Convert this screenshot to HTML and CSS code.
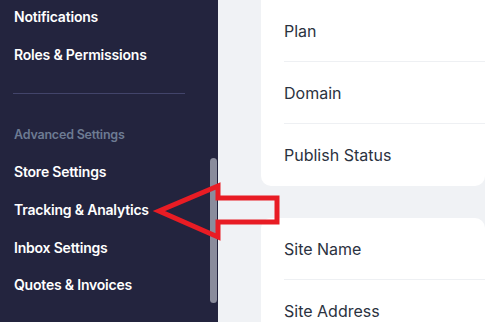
FILE: index.html
```html
<!DOCTYPE html>
<html lang="en">
<head>
    <meta charset="UTF-8">
    <title>Settings</title>
    <link rel="stylesheet" href="styles.css">
</head>

<body>
    <div class="layout">
        <aside class="sidebar">
            <nav class="nav">
                <a class="nav-item">Notifications</a>
                <a class="nav-item">Roles &amp; Permissions</a>
                <div class="nav-divider"></div>
                <div class="nav-heading">Advanced Settings</div>
                <a class="nav-item">Store Settings</a>
                <a class="nav-item">Tracking &amp; Analytics</a>
                <a class="nav-item">Inbox Settings</a>
                <a class="nav-item">Quotes &amp; Invoices</a>
            </nav>
            <div class="scrollbar"></div>
        </aside>

        <main class="content">
            <section class="card card-scrolled">
                <div class="row">Plan</div>
                <div class="row">Domain</div>
                <div class="row">Publish Status</div>
            </section>

            <section class="card">
                <div class="row">Site Name</div>
                <div class="row">Site Address</div>
            </section>
        </main>
    </div>

    <svg class="pointer" width="485" height="322" viewBox="0 0 485 322">
        <polygon points="159,211 218,186 218,198 277,198 277,222 218,222 218,237"
                 fill="none" stroke="#e81c24" stroke-width="5" stroke-linejoin="miter"/>
    </svg>
</body>
</html>
```

FILE: styles.css
```css
* {
    box-sizing: border-box;
    margin: 0;
    padding: 0;
}

body {
    font-family: Inter, 'Liberation Sans', sans-serif;
    background-color: #f0f2f5;
    overflow: hidden;
    height: 322px;
}

.layout {
    display: flex;
    height: 322px;
    overflow: hidden;
}

.sidebar {
    position: relative;
    width: 218px;
    flex-shrink: 0;
    background-color: #23243e;
    overflow: hidden;
}

.nav {
    display: flex;
    flex-direction: column;
    padding: 0 14px;
    margin-top: -2px;
}

.nav-item {
    display: flex;
    align-items: center;
    height: 37.7px;
    color: #ffffff;
    font-size: 14px;
    font-weight: 600;
    letter-spacing: -0.2px;
}

.nav-divider {
    height: 1px;
    width: 172px;
    margin: 20px 0 21px -1px;
    background-color: #42446a;
}

.nav-heading {
    display: flex;
    align-items: center;
    height: 37.7px;
    color: #6d7b93;
    font-size: 12.5px;
    font-weight: 600;
    letter-spacing: -0.2px;
}

.scrollbar {
    position: absolute;
    left: 210px;
    top: 158px;
    width: 7px;
    height: 145px;
    border-radius: 4px;
    background-color: #8a8c9c;
}

.content {
    flex: 1;
    padding-left: 43px;
    display: flex;
    flex-direction: column;
    gap: 32px;
}

.card {
    background-color: #ffffff;
    border-radius: 10px;
    padding-left: 23px;
}

.card-scrolled {
    margin-top: -20px;
    padding-top: 20px;
}

.row {
    display: flex;
    align-items: center;
    height: 62px;
    color: #2b3240;
    font-size: 16px;
    border-bottom: 1px solid #eef0f3;
}

.row:last-child {
    border-bottom: none;
}

.pointer {
    position: absolute;
    left: 0;
    top: 0;
    pointer-events: none;
}
```
